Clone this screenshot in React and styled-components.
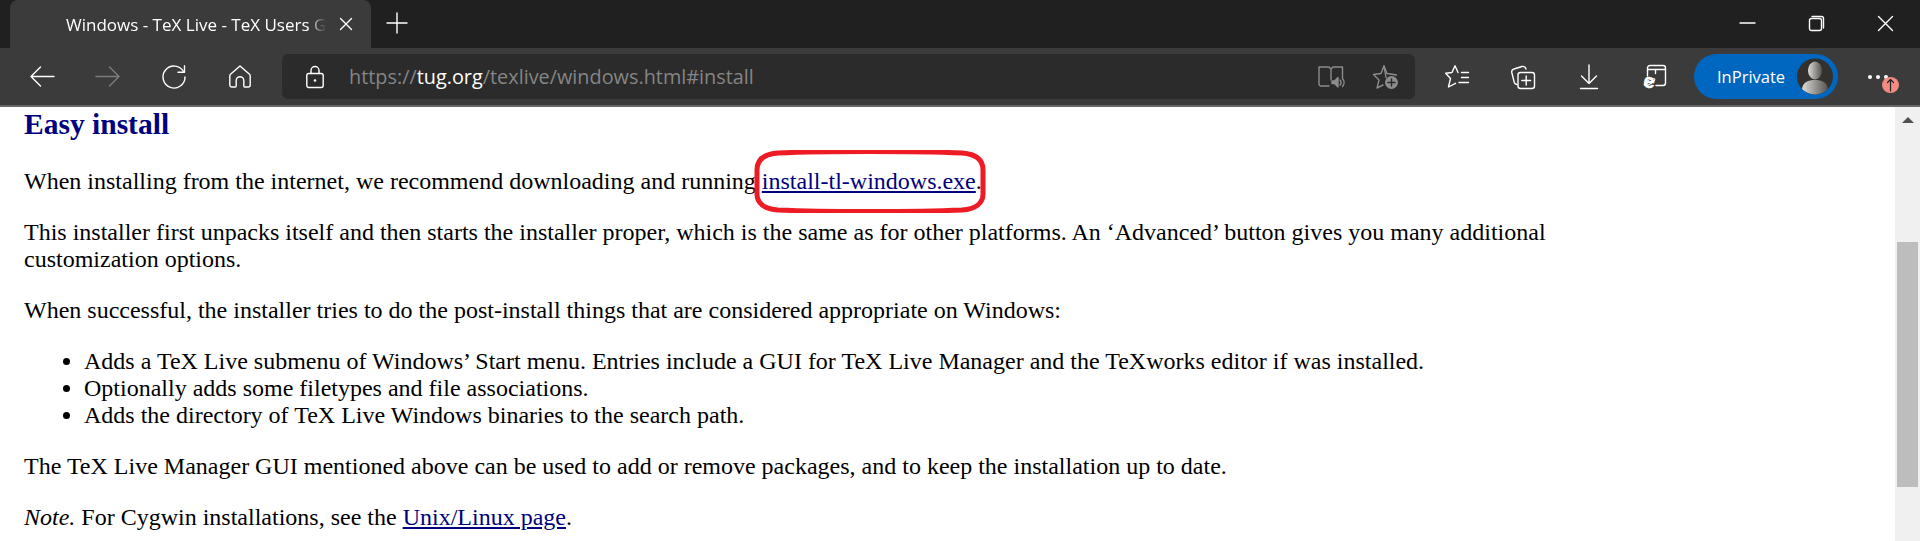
import React from "react";
import styled, { createGlobalStyle } from "styled-components";

const GlobalStyle = createGlobalStyle`
  html, body {
    margin: 0;
    padding: 0;
    height: 541px;
    overflow: hidden;
    background: #fff;
  }
`;

const Window = styled.div`
  width: 1920px;
  height: 541px;
  display: flex;
  flex-direction: column;
  overflow: hidden;
`;

const TabStrip = styled.div`
  height: 48px;
  flex: none;
  background: #202020;
  display: flex;
  padding-left: 10px;
  color: #fff;
`;

const Tab = styled.div`
  width: 361px;
  height: 48px;
  padding: 0 19px 0 56px;
  box-sizing: border-box;
  background: #3b3b3b;
  border-radius: 8px 8px 0 0;
  display: flex;
  align-items: center;
  justify-content: space-between;
`;

const TabTitle = styled.span`
  width: 260px;
  overflow: hidden;
  white-space: nowrap;
  font: 17px "Open Sans", sans-serif;
  -webkit-mask-image: linear-gradient(to right, #000 93%, transparent);
  mask-image: linear-gradient(to right, #000 93%, transparent);
`;

const NewTab = styled.div`
  margin-left: 16px;
  height: 46px;
  display: flex;
  align-items: center;
`;

const WindowControls = styled.div`
  margin-left: auto;
  display: flex;
`;

const ControlSlot = styled.div`
  width: 69px;
  height: 46px;
  display: flex;
  align-items: center;
  justify-content: center;
`;

const Toolbar = styled.div`
  height: 57px;
  flex: none;
  box-sizing: border-box;
  padding-top: 6px;
  background: #3b3b3b;
  display: flex;
  align-items: flex-start;
`;

const ToolbarRule = styled.div`
  height: 2px;
  flex: none;
  background: #666;
`;

const NavButtons = styled.div`
  width: 282px;
  height: 45px;
  flex: none;
  padding-left: 9px;
  box-sizing: border-box;
  display: flex;
`;

const ToolSlot = styled.div`
  width: 66px;
  height: 45px;
  display: flex;
  align-items: center;
  justify-content: center;
`;

const AddressBar = styled.div`
  width: 1133px;
  height: 45px;
  flex: none;
  box-sizing: border-box;
  padding: 0 17px 0 24px;
  background: #2b2b2b;
  border-radius: 6px;
  display: flex;
  align-items: center;
`;

const Url = styled.span`
  margin-left: 25px;
  font: 19.85px "Open Sans", sans-serif;
  color: #858585;
  b {
    font-weight: 400;
    color: #fff;
  }
`;

const AddressActions = styled.div`
  margin-left: auto;
  display: flex;
  align-items: center;
  gap: 29px;
`;

const ToolIcons = styled.div`
  width: 279px;
  height: 45px;
  flex: none;
  padding-left: 9px;
  box-sizing: border-box;
  display: flex;
`;

const ProfilePill = styled.div`
  width: 144px;
  height: 45px;
  flex: none;
  box-sizing: border-box;
  padding: 0 5px 0 23px;
  border-radius: 23px;
  background: #0067c0;
  color: #fff;
  display: flex;
  align-items: center;
  justify-content: space-between;
  font: 16.5px "Open Sans", sans-serif;
`;

const MoreButton = styled.div`
  position: relative;
  margin-left: 30px;
  height: 45px;
  display: flex;
  align-items: center;
  gap: 4px;
`;

const Dot = styled.i`
  width: 4px;
  height: 4px;
  border-radius: 50%;
  background: #fff;
`;

const UpdateBadge = styled.div`
  position: absolute;
  left: 14px;
  top: 23px;
  width: 17px;
  height: 16px;
  border-radius: 50%;
  background: #f28b82;
  display: flex;
  align-items: center;
  justify-content: center;
`;

const Viewport = styled.div`
  flex: 1;
  min-height: 0;
  display: flex;
`;

const Page = styled.main`
  flex: 1;
  min-width: 0;
  padding: 0 300px 0 24px;
  background: #fff;
  color: #000;
  font: 24px/27px "Liberation Serif", "Times New Roman", serif;
`;

const Heading = styled.h3`
  margin: 1px 0 28px;
  color: #000080;
  font-size: 29.5px;
  font-weight: 700;
  line-height: 32px;
`;

const Para = styled.p`
  margin: 0 0 24px;
`;

const BulletList = styled.ul`
  margin: 0 0 24px;
  padding-left: 60px;
`;

const PageLink = styled.a`
  color: #000080;
  text-decoration: underline;
`;

const Circled = styled.span`
  position: relative;
`;

const RedRing = styled.svg`
  position: absolute;
  left: -8px;
  top: -18px;
  pointer-events: none;
`;

const Scrollbar = styled.div`
  width: 25px;
  flex: none;
  background: #f0f0f0;
  padding: 10px 2px 0;
  box-sizing: border-box;
  display: flex;
  flex-direction: column;
  align-items: center;
`;

const ScrollArrow = styled.div`
  width: 0;
  height: 0;
  border-left: 6px solid transparent;
  border-right: 6px solid transparent;
  border-bottom: 6px solid #505050;
`;

const ScrollThumb = styled.div`
  width: 21px;
  height: 245px;
  margin-top: 119px;
  background: #bdbdbd;
`;

const Glyph = styled.svg`
  flex: none;
  display: block;
  overflow: visible;
  fill: none;
  stroke: ${(p) => p.$color || "#fff"};
  stroke-width: ${(p) => p.$sw || 1.4};
  stroke-linecap: round;
  stroke-linejoin: round;
`;

const Icon = ({ w, h, color, sw, children }) => (
  <Glyph width={w} height={h} viewBox={`0 0 ${w} ${h}`} $color={color} $sw={sw}>
    {children}
  </Glyph>
);

const GREY = "#8c8c8c";

export default function App() {
  return (
    <Window>
      <GlobalStyle />
      <TabStrip>
        <Tab>
          <TabTitle>Windows - TeX Live - TeX Users Group</TabTitle>
          <Icon w={12} h={12}>
            <path d="M.5.5l11 11M11.5.5l-11 11" />
          </Icon>
        </Tab>
        <NewTab>
          <Icon w={20} h={20}>
            <path d="M10 0v20M0 10h20" />
          </Icon>
        </NewTab>
        <WindowControls>
          <ControlSlot>
            <Icon w={15} h={2}>
              <path d="M0 1h15" />
            </Icon>
          </ControlSlot>
          <ControlSlot>
            <Icon w={15} h={15}>
              <rect x="0.5" y="2.5" width="12" height="12" rx="2" />
              <path d="M3 .5h9.5a2 2 0 0 1 2 2V12" />
            </Icon>
          </ControlSlot>
          <ControlSlot>
            <Icon w={15} h={15}>
              <path d="M.5.5l14 14M14.5.5l-14 14" />
            </Icon>
          </ControlSlot>
        </WindowControls>
      </TabStrip>
      <Toolbar>
        <NavButtons>
          <ToolSlot>
            <Icon w={24} h={21}>
              <path d="M1 10.5h23M10.5 1L1 10.5l9.5 9.5" />
            </Icon>
          </ToolSlot>
          <ToolSlot>
            <Icon w={24} h={21} color="#7c7c7c">
              <path d="M0 10.5h23M13.5 1L23 10.5 13.5 20" />
            </Icon>
          </ToolSlot>
          <ToolSlot>
            <Icon w={24} h={24}>
              <path d="M21.5 6.5A11 11 0 1 0 23 12" />
              <path d="M22.5 .8v6.4H16" />
            </Icon>
          </ToolSlot>
          <ToolSlot>
            <Icon w={22} h={23}>
              <path d="M11 1l9.5 8.3a2 2 0 0 1 .7 1.5V20a2 2 0 0 1-2 2h-3.4a1 1 0 0 1-1-1v-5.5a3.8 3.8 0 0 0-7.6 0V21a1 1 0 0 1-1 1H2.8a2 2 0 0 1-2-2v-9.2a2 2 0 0 1 .7-1.5z" />
            </Icon>
          </ToolSlot>
        </NavButtons>
        <AddressBar>
          <Icon w={18} h={22}>
            <rect x="0.8" y="7.5" width="16.4" height="14" rx="2" />
            <path d="M5 7.5V4.5a4 4 0 0 1 8 0v3" />
            <circle cx="9" cy="14.5" r="1.3" fill="#fff" stroke="none" />
          </Icon>
          <Url>
            https://<b>tug.org</b>/texlive/windows.html#install
          </Url>
          <AddressActions>
            <Icon w={26} h={22} color={GREY}>
              <path d="M11 20H3a2 2 0 0 1-2-2V1h10l2 2 2-2h9.5v11M13 3v11" />
              <path d="M14 15h2.5l3.5-3.5V21l-3.5-3.5H14z" fill={GREY} />
              <path d="M22 14a3.5 3.5 0 0 1 0 5M24.5 12.5a6 6 0 0 1 0 8" />
            </Icon>
            <Icon w={25} h={24} color={GREY}>
              <path d="M13 12.5L11 1l-3 7.5-7.5 1 5.5 5.5-2 8 6-3" />
              <path d="M11 1l3 7.5 9.5 1.5" />
              <circle cx="18.5" cy="17.5" r="6.5" fill={GREY} stroke="none" />
              <path d="M18.5 14v7M15 17.5h7" stroke="#2b2b2b" />
            </Icon>
          </AddressActions>
        </AddressBar>
        <ToolIcons>
          <ToolSlot>
            <Icon w={24} h={23}>
              <path d="M16.5 7.5h7M16.5 12.5h7M14 17.5h9.5" />
              <path d="M13 7.5L10 .8 7 7.5l-6.3.8 4.8 5.2L3.5 22l7-3.7" />
            </Icon>
          </ToolSlot>
          <ToolSlot>
            <Icon w={24} h={24}>
              <path d="M6 19.5a3.5 3.5 0 0 1-2.8-2.3L.8 7.5A3 3 0 0 1 3 4L11 1.5A3.5 3.5 0 0 1 15 4" />
              <rect x="7" y="7.5" width="16.5" height="16" rx="2.5" />
              <path d="M15.2 11v9M10.8 15.5h8.8" />
            </Icon>
          </ToolSlot>
          <ToolSlot>
            <Icon w={18} h={24}>
              <path d="M9 0v18.5M1.5 11L9 18.5 16.5 11M.5 23.5h17" />
            </Icon>
          </ToolSlot>
          <ToolSlot>
            <Icon w={21} h={23}>
              <path d="M2.5 11V3a2.5 2.5 0 0 1 2.5-2.5h13A2.5 2.5 0 0 1 20.5 3v15a2.5 2.5 0 0 1-2.5 2.5h-7M2.5 4.5h18M10.5 4.5v4" />
              <ellipse cx="4.5" cy="17" rx="6" ry="2" transform="rotate(-30 4.5 17)" strokeWidth="1" />
              <text
                x="-1.5"
                y="23"
                fill="#fff"
                stroke="#fff"
                strokeWidth="0.4"
                fontFamily="Liberation Sans, sans-serif"
                fontWeight="700"
                fontSize="20"
              >
                e
              </text>
            </Icon>
          </ToolSlot>
        </ToolIcons>
        <ProfilePill>
          InPrivate
          <svg width="36" height="37" viewBox="0 0 36 37" style={{ flex: "none" }}>
            <defs>
              <linearGradient id="silhouette" x1="0" x2="1" y1="0" y2="0">
                <stop offset="0" stopColor="#dcdcd8" />
                <stop offset="1" stopColor="#55534f" />
              </linearGradient>
            </defs>
            <circle cx="18" cy="18.5" r="18" fill="#33302d" />
            <ellipse cx="18" cy="12.5" rx="7" ry="9" fill="url(#silhouette)" />
            <path d="M5 31c1-7 6-9 13-9s12 2 13 9a18 18 0 0 1-26 0z" fill="url(#silhouette)" />
          </svg>
        </ProfilePill>
        <MoreButton>
          <Dot />
          <Dot />
          <Dot />
          <UpdateBadge>
            <Icon w={7} h={12} color="#222" sw={1.2}>
              <path d="M3.5 12V.5M.5 3.5l3-3 3 3" />
            </Icon>
          </UpdateBadge>
        </MoreButton>
      </Toolbar>
      <ToolbarRule />
      <Viewport>
        <Page>
          <Heading>Easy install</Heading>
          <Para>
            When installing from the internet, we recommend downloading and running{" "}
            <Circled>
              <PageLink>install-tl-windows.exe</PageLink>
              <RedRing width="232" height="63" viewBox="0 0 232 63" fill="none">
                <path
                  d="M24 3C70 1 160 1 208 3C222 4 229 10 229 20V44C229 53 222 59 208 60C160 62 70 62 24 60C10 59 3 53 3 44V20C3 10 10 4 24 3Z"
                  stroke="#ed1c24"
                  strokeWidth="5"
                />
              </RedRing>
            </Circled>
            .
          </Para>
          <Para>
            This installer first unpacks itself and then starts the installer proper, which is the same as for other platforms. An ‘Advanced’ button gives you many additional customization options.
          </Para>
          <Para>When successful, the installer tries to do the post-install things that are considered appropriate on Windows:</Para>
          <BulletList>
            <li>Adds a TeX Live submenu of Windows’ Start menu. Entries include a GUI for TeX Live Manager and the TeXworks editor if was installed.</li>
            <li>Optionally adds some filetypes and file associations.</li>
            <li>Adds the directory of TeX Live Windows binaries to the search path.</li>
          </BulletList>
          <Para>The TeX Live Manager GUI mentioned above can be used to add or remove packages, and to keep the installation up to date.</Para>
          <Para>
            <em>Note.</em> For Cygwin installations, see the <PageLink>Unix/Linux page</PageLink>.
          </Para>
        </Page>
        <Scrollbar>
          <ScrollArrow />
          <ScrollThumb />
        </Scrollbar>
      </Viewport>
    </Window>
  );
}
